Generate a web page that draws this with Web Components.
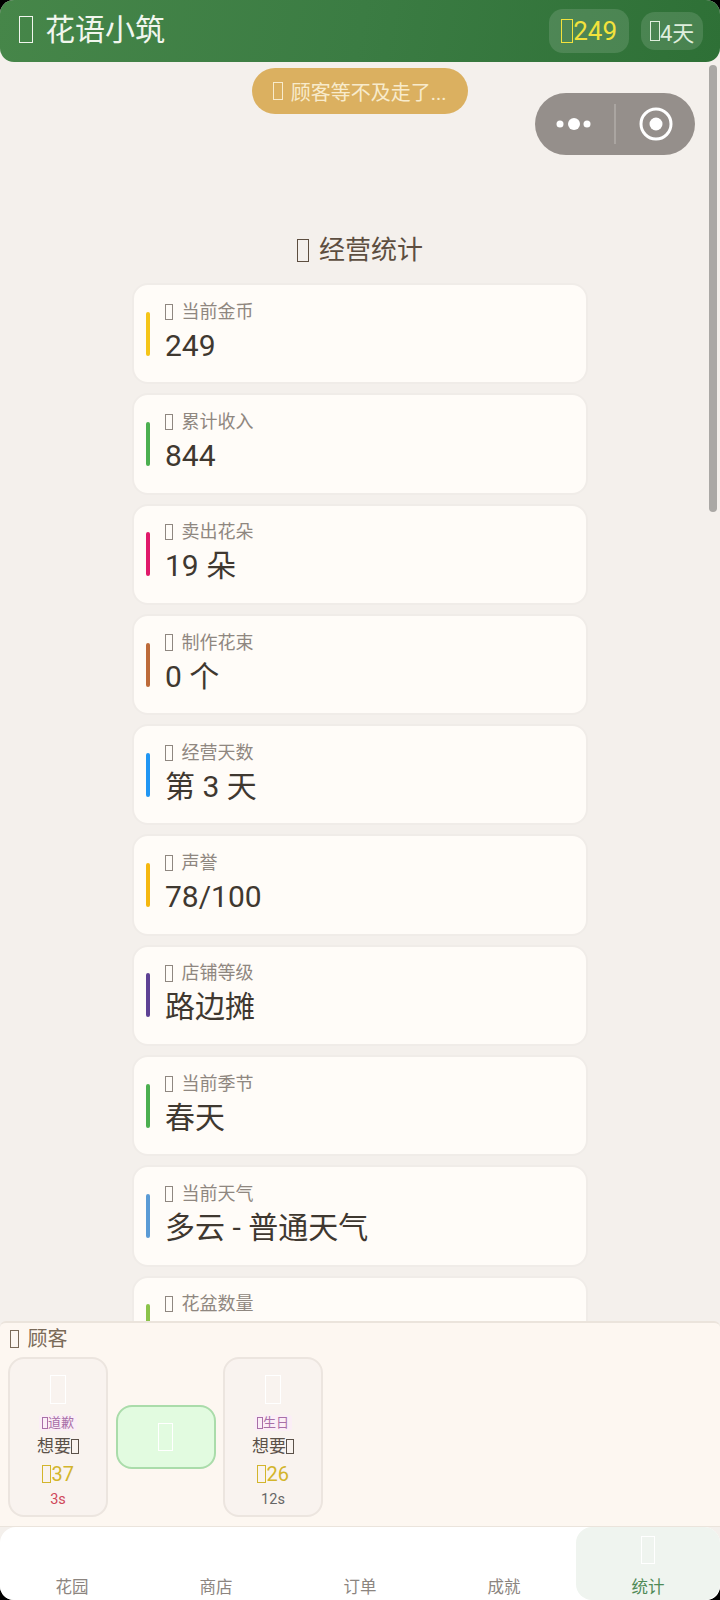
<!DOCTYPE html>
<html lang="zh">
<head>
<meta charset="utf-8">
<title>花语小筑</title>
<style>
  html, body { margin: 0; background: #000; }
  body { font-family: Roboto, "Noto Sans CJK SC", sans-serif; }
</style>
</head>
<body>
<flower-app></flower-app>
<script>
// missing emoji show up as empty boxes in the reference, so the box is its own element
class TofuMark extends HTMLElement {
  constructor() {
    super();
    this.attachShadow({ mode: 'open' }).innerHTML = `
      <style>
        :host {
          display: inline-block;
          box-sizing: border-box;
          width: .47em;
          height: .9em;
          border: 1px solid currentColor;
          vertical-align: -.12em;
          flex: none;
        }
      </style>`;
  }
}
customElements.define('tofu-mark', TofuMark);

const headerTemplate = document.createElement('template');
headerTemplate.innerHTML = `
  <style>
    :host {
      display: flex;
      align-items: center;
      height: 62px;
      box-sizing: border-box;
      padding: 0 17px 0 19px;
      color: #f1f6ee;
      background: linear-gradient(100deg, #468649 0%, #3b7c43 50%, #2e7036 100%);
      border-radius: 0 0 14px 14px;
    }
    .title { font-size: 30px; line-height: 40px; flex: 1; margin-top: -3px; }
    .title tofu-mark { margin-right: 12px; }
    .coins, .days {
      display: flex;
      align-items: center;
      justify-content: center;
      box-sizing: border-box;
      border-radius: 14px;
      background: rgba(255,255,255,.13);
    }
    .coins { width: 80px; height: 44px; margin-right: 12px; font-size: 26px; color: #f3e23c; }
    .days { width: 62px; height: 38px; font-size: 22px; color: #dfeedd; }
  </style>
  <div class="title"><tofu-mark></tofu-mark>花语小筑</div>
  <div class="coins"><tofu-mark></tofu-mark>249</div>
  <div class="days"><tofu-mark></tofu-mark>4天</div>
`;
class AppHeader extends HTMLElement {
  constructor() {
    super();
    this.attachShadow({ mode: 'open' }).appendChild(headerTemplate.content.cloneNode(true));
  }
}
customElements.define('app-header', AppHeader);

const capsuleTemplate = document.createElement('template');
capsuleTemplate.innerHTML = `
  <style>
    :host {
      position: absolute;
      top: 31px;
      left: 535px;
      width: 160px;
      height: 62px;
      display: block;
      border-radius: 31px;
      background: #958f8b;
    }
    svg { display: block; }
  </style>
  <svg width="160" height="62" viewBox="0 0 160 62">
    <circle cx="25" cy="31" r="3.5" fill="#fff"/>
    <circle cx="39" cy="31" r="6" fill="#fff"/>
    <circle cx="52" cy="31" r="3.5" fill="#fff"/>
    <path d="M80 11v40" stroke="#aaa5a1" stroke-width="2"/>
    <circle cx="121" cy="31" r="15" fill="none" stroke="#fff" stroke-width="3"/>
    <circle cx="121" cy="31" r="6.5" fill="#fff"/>
  </svg>
`;
class CapsuleMenu extends HTMLElement {
  constructor() {
    super();
    this.attachShadow({ mode: 'open' }).appendChild(capsuleTemplate.content.cloneNode(true));
  }
}
customElements.define('capsule-menu', CapsuleMenu);

const statTemplate = document.createElement('template');
statTemplate.innerHTML = `
  <style>
    :host {
      display: flex;
      align-items: center;
      flex: none;
      box-sizing: border-box;
      width: 456px;
      height: 101.3px;
      padding: 0 10px 0 12px;
      background: #fffcf8;
      border: 2px solid #f0ece8;
      border-radius: 16px;
    }
    .bar { width: 4px; height: 44px; border-radius: 2px; margin-right: 15px; background: var(--accent); }
    .label { font-size: 18px; line-height: 24px; color: #8f8780; display: flex; align-items: center; }
    .label tofu-mark { margin-right: 8px; }
    .value { font-size: 30px; line-height: 44px; min-height: 44px; color: #3f3830; }
  </style>
  <div class="bar"></div>
  <div>
    <div class="label"><tofu-mark></tofu-mark><span id="label"></span></div>
    <div class="value" id="value"></div>
  </div>
`;
class StatCard extends HTMLElement {
  constructor() {
    super();
    this.attachShadow({ mode: 'open' }).appendChild(statTemplate.content.cloneNode(true));
  }
  connectedCallback() {
    this.style.setProperty('--accent', this.getAttribute('accent'));
    this.shadowRoot.getElementById('label').textContent = this.getAttribute('label');
    this.shadowRoot.getElementById('value').textContent = this.getAttribute('value');
  }
}
customElements.define('stat-card', StatCard);

const customerTemplate = document.createElement('template');
customerTemplate.innerHTML = `
  <style>
    :host {
      display: flex;
      flex-direction: column;
      align-items: center;
      box-sizing: border-box;
      width: 100px;
      height: 160px;
      padding-top: 12px;
      background: #f9f3ef;
      border: 2px solid #ece5df;
      border-radius: 16px;
      color: #5b5149;
    }
    .face { font-size: 32px; line-height: 36px; color: #fff; height: 36px; }
    .tag { margin-top: 8px; padding: 0 3px; font-size: 13px; line-height: 16px; color: #a96fa8; background: #fbeef6; border-radius: 3px; }
    .want { margin-top: 2px; font-size: 17px; line-height: 26px; }
    .price { margin-top: 1px; font-size: 20px; line-height: 28px; color: #d3b52c; }
    .time { margin-top: 2px; font-size: 14.5px; line-height: 20px; color: var(--time, #666); }
  </style>
  <div class="face"><tofu-mark></tofu-mark></div>
  <div class="tag"><tofu-mark></tofu-mark><span id="tag"></span></div>
  <div class="want">想要<tofu-mark></tofu-mark></div>
  <div class="price"><tofu-mark></tofu-mark><span id="price"></span></div>
  <div class="time" id="time"></div>
`;
class CustomerCard extends HTMLElement {
  constructor() {
    super();
    this.attachShadow({ mode: 'open' }).appendChild(customerTemplate.content.cloneNode(true));
  }
  connectedCallback() {
    for (const key of ['tag', 'price', 'time']) {
      this.shadowRoot.getElementById(key).textContent = this.getAttribute(key);
    }
    if (this.hasAttribute('urgent')) this.style.setProperty('--time', '#d0485a');
  }
}
customElements.define('customer-card', CustomerCard);

const tabTemplate = document.createElement('template');
tabTemplate.innerHTML = `
  <style>
    :host {
      flex: 1;
      display: flex;
      flex-direction: column;
      align-items: center;
      box-sizing: border-box;
      height: 73px;
      padding-top: 7px;
      color: #8c8580;
      border-radius: 16px;
    }
    :host([active]) { background: #eff4ef; color: #4f8a57; }
    .icon { font-size: 31px; line-height: 32px; height: 32px; color: #fff; }
    .name { margin-top: 10px; font-size: 16.5px; line-height: 24px; }
  </style>
  <div class="icon"><tofu-mark></tofu-mark></div>
  <div class="name"><slot></slot></div>
`;
class TabItem extends HTMLElement {
  constructor() {
    super();
    this.attachShadow({ mode: 'open' }).appendChild(tabTemplate.content.cloneNode(true));
  }
}
customElements.define('tab-item', TabItem);

// last card's value sits behind the customer panel, the reference never shows it
const stats = [
  ['当前金币', '249', '#f5c518'],
  ['累计收入', '844', '#4caf50'],
  ['卖出花朵', '19 朵', '#e0196a'],
  ['制作花束', '0 个', '#bd6b3a'],
  ['经营天数', '第 3 天', '#2196f3'],
  ['声誉', '78/100', '#f5b70f'],
  ['店铺等级', '路边摊', '#5e4294'],
  ['当前季节', '春天', '#4caf50'],
  ['当前天气', '多云 - 普通天气', '#5b9bd5'],
  ['花盆数量', '', '#8bc34a'],
];

const appTemplate = document.createElement('template');
appTemplate.innerHTML = `
  <style>
    :host {
      display: flex;
      flex-direction: column;
      width: 720px;
      height: 1600px;
      overflow: hidden;
      background: #f4f0ec;
      border-radius: 14px;
    }
    main {
      position: relative;
      flex: 1;
      min-height: 0;
      overflow: hidden;
      display: flex;
      flex-direction: column;
      align-items: center;
      padding-top: 170px;
    }
    h2 {
      margin: 0 0 15px;
      font-size: 26px;
      line-height: 36px;
      font-weight: 400;
      color: #5d4e40;
    }
    h2 tofu-mark { margin-right: 10px; }
    .list { display: flex; flex-direction: column; gap: 9px; }
    .toast {
      position: absolute;
      top: 6px;
      left: 252px;
      width: 216px;
      height: 46px;
      display: flex;
      align-items: center;
      justify-content: center;
      border-radius: 23px;
      background: #dbb060;
      color: #f8ebcc;
      font-size: 20px;
    }
    .toast tofu-mark { margin-right: 8px; }
    .scrollbar {
      position: absolute;
      top: 3px;
      left: 709px;
      width: 8px;
      height: 447px;
      border-radius: 4px;
      background: #aaa8a5;
    }
    .customers {
      height: 206px;
      flex: none;
      box-sizing: border-box;
      padding: 2px 8px 0;
      background: #fdf7f1;
      border-top: 2px solid #ebe4dc;
      border-bottom: 1px solid #ebe4dc;
      border-radius: 6px 6px 0 0;
    }
    .customers h3 {
      margin: 0 0 4px;
      font-size: 20px;
      line-height: 28px;
      font-weight: 400;
      color: #7a6a58;
    }
    .customers h3 tofu-mark { margin: 0 8px 0 2px; }
    .row { display: flex; align-items: center; gap: 7.5px; }
    .waiting {
      width: 100px;
      height: 64px;
      box-sizing: border-box;
      display: flex;
      align-items: center;
      justify-content: center;
      background: #e2fbe0;
      border: 2px solid #aadcaa;
      border-radius: 16px;
      color: #fff;
      font-size: 32px;
    }
    nav {
      flex: none;
      display: flex;
      height: 73px;
      background: #fff;
      border-radius: 16px 16px 0 0;
    }
  </style>
  <app-header></app-header>
  <main>
    <h2><tofu-mark></tofu-mark>经营统计</h2>
    <div class="list"></div>
    <div class="toast"><tofu-mark></tofu-mark>顾客等不及走了...</div>
    <capsule-menu></capsule-menu>
    <div class="scrollbar"></div>
  </main>
  <section class="customers">
    <h3><tofu-mark></tofu-mark>顾客</h3>
    <div class="row">
      <customer-card tag="道歉" price="37" time="3s" urgent></customer-card>
      <div class="waiting"><tofu-mark></tofu-mark></div>
      <customer-card tag="生日" price="26" time="12s"></customer-card>
    </div>
  </section>
  <nav>
    <tab-item>花园</tab-item>
    <tab-item>商店</tab-item>
    <tab-item>订单</tab-item>
    <tab-item>成就</tab-item>
    <tab-item active>统计</tab-item>
  </nav>
`;
class FlowerApp extends HTMLElement {
  constructor() {
    super();
    this.attachShadow({ mode: 'open' }).appendChild(appTemplate.content.cloneNode(true));
    const list = this.shadowRoot.querySelector('.list');
    for (const [label, value, accent] of stats) {
      const card = document.createElement('stat-card');
      card.setAttribute('label', label);
      card.setAttribute('value', value);
      card.setAttribute('accent', accent);
      list.appendChild(card);
    }
  }
}
customElements.define('flower-app', FlowerApp);
</script>
</body>
</html>
